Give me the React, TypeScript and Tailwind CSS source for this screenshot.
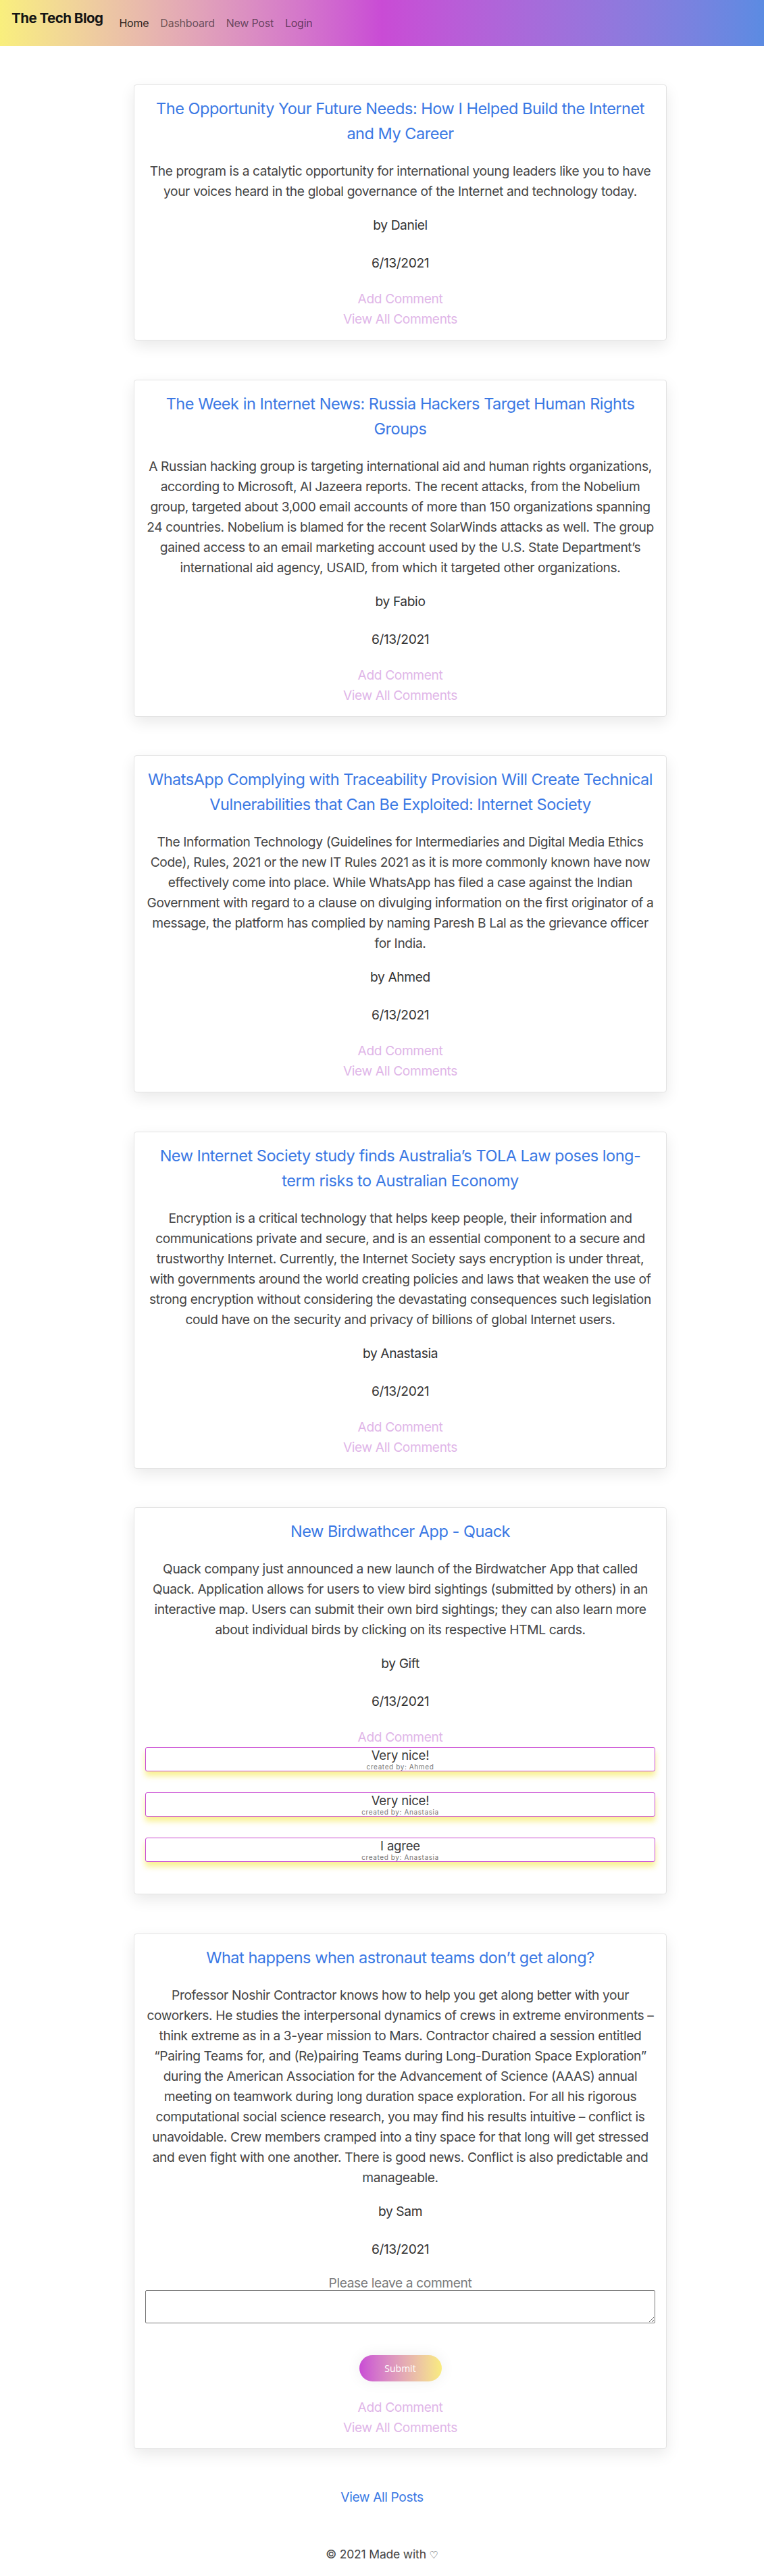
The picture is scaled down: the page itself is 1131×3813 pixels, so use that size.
import React from "react";

type Comment = {
  text: string;
  author: string;
};

type Post = {
  id: number;
  title: string[];
  body: string[];
  author: string;
  date: string;
  comments?: Comment[];
  showForm?: boolean;
};

const POSTS: Post[] = [
  {
    id: 1,
    title: [
      "The Opportunity Your Future Needs: How I Helped Build the Internet",
      "and My Career",
    ],
    body: [
      "The program is a catalytic opportunity for international young leaders like you to have",
      "your voices heard in the global governance of the Internet and technology today.",
    ],
    author: "Daniel",
    date: "6/13/2021",
  },
  {
    id: 2,
    title: [
      "The Week in Internet News: Russia Hackers Target Human Rights",
      "Groups",
    ],
    body: [
      "A Russian hacking group is targeting international aid and human rights organizations,",
      "according to Microsoft, Al Jazeera reports. The recent attacks, from the Nobelium",
      "group, targeted about 3,000 email accounts of more than 150 organizations spanning",
      "24 countries. Nobelium is blamed for the recent SolarWinds attacks as well. The group",
      "gained access to an email marketing account used by the U.S. State Department’s",
      "international aid agency, USAID, from which it targeted other organizations.",
    ],
    author: "Fabio",
    date: "6/13/2021",
  },
  {
    id: 3,
    title: [
      "WhatsApp Complying with Traceability Provision Will Create Technical",
      "Vulnerabilities that Can Be Exploited: Internet Society",
    ],
    body: [
      "The Information Technology (Guidelines for Intermediaries and Digital Media Ethics",
      "Code), Rules, 2021 or the new IT Rules 2021 as it is more commonly known have now",
      "effectively come into place. While WhatsApp has filed a case against the Indian",
      "Government with regard to a clause on divulging information on the first originator of a",
      "message, the platform has complied by naming Paresh B Lal as the grievance officer",
      "for India.",
    ],
    author: "Ahmed",
    date: "6/13/2021",
  },
  {
    id: 4,
    title: [
      "New Internet Society study finds Australia’s TOLA Law poses long-",
      "term risks to Australian Economy",
    ],
    body: [
      "Encryption is a critical technology that helps keep people, their information and",
      "communications private and secure, and is an essential component to a secure and",
      "trustworthy Internet. Currently, the Internet Society says encryption is under threat,",
      "with governments around the world creating policies and laws that weaken the use of",
      "strong encryption without considering the devastating consequences such legislation",
      "could have on the security and privacy of billions of global Internet users.",
    ],
    author: "Anastasia",
    date: "6/13/2021",
  },
  {
    id: 5,
    title: ["New Birdwathcer App - Quack"],
    body: [
      "Quack company just announced a new launch of the Birdwatcher App that called",
      "Quack. Application allows for users to view bird sightings (submitted by others) in an",
      "interactive map. Users can submit their own bird sightings; they can also learn more",
      "about individual birds by clicking on its respective HTML cards.",
    ],
    author: "Gift",
    date: "6/13/2021",
    comments: [
      { text: "Very nice!", author: "Ahmed" },
      { text: "Very nice!", author: "Anastasia" },
      { text: "I agree", author: "Anastasia" },
    ],
  },
  {
    id: 6,
    title: ["What happens when astronaut teams don’t get along?"],
    body: [
      "Professor Noshir Contractor knows how to help you get along better with your",
      "coworkers. He studies the interpersonal dynamics of crews in extreme environments –",
      "think extreme as in a 3-year mission to Mars. Contractor chaired a session entitled",
      "“Pairing Teams for, and (Re)pairing Teams during Long-Duration Space Exploration”",
      "during the American Association for the Advancement of Science (AAAS) annual",
      "meeting on teamwork during long duration space exploration. For all his rigorous",
      "computational social science research, you may find his results intuitive – conflict is",
      "unavoidable. Crew members cramped into a tiny space for that long will get stressed",
      "and even fight with one another. There is good news. Conflict is also predictable and",
      "manageable.",
    ],
    author: "Sam",
    date: "6/13/2021",
    showForm: true,
  },
];

function Lines({ lines }: { lines: string[] }) {
  return (
    <>
      {lines.map((line, i) => (
        <React.Fragment key={i}>
          {i > 0 && <br />}
          {line}
        </React.Fragment>
      ))}
    </>
  );
}

function Navbar() {
  return (
    <header className="flex h-[68px] items-start bg-gradient-to-r from-[#f9ef7d] via-[#c94bd5] to-[#5b8be2] pl-[17px]">
      <a className="mt-[12px] text-[20.5px] font-bold leading-[30px] tracking-[-0.025em] text-[#151515]">
        The Tech Blog
      </a>
      <nav className="ml-[24px] mt-[22px] flex gap-[17px] text-[16px] leading-[24px] tracking-[-0.015em]">
        <a className="text-[rgba(0,0,0,0.85)]">Home</a>
        <a className="text-[rgba(0,0,0,0.55)]">Dashboard</a>
        <a className="text-[rgba(0,0,0,0.55)]">New Post</a>
        <a className="text-[rgba(0,0,0,0.55)]">Login</a>
      </nav>
    </header>
  );
}

function PostCard({ post }: { post: Post }) {
  return (
    <article className="rounded-[4px] border border-[#e3e3e3] bg-white p-4 text-center shadow-[0_8px_22px_rgba(0,0,0,0.09)]">
      <h2 className="whitespace-nowrap text-[23.5px] leading-[37px] tracking-[-0.02em] text-[#3a78e4]">
        <Lines lines={post.title} />
      </h2>

      <p className="mt-[22px] whitespace-nowrap text-[19.2px] leading-[30px] tracking-[-0.02em] text-[#454545]">
        <Lines lines={post.body} />
      </p>

      <p className="mt-[20px] text-[19.2px] leading-[30px] tracking-[-0.02em] text-[#333]">
        by {post.author}
      </p>
      <p className="mt-[26px] text-[19.2px] leading-[30px] tracking-[-0.02em] text-[#333]">
        {post.date}
      </p>

      {/* comment form */}
      {post.showForm && (
        <form className="mt-[24px]">
          <label className="block text-[19.2px] leading-[22px] tracking-[-0.02em] text-[#7b7b7b]">
            Please leave a comment
          </label>
          <textarea className="block h-[49px] w-full rounded-[2px] border border-[#767676] bg-white" />
          <button
            type="button"
            className="mx-auto mt-[47px] block h-[39px] w-[122px] rounded-full bg-gradient-to-r from-[#c94bd5] to-[#f9ec7e] font-['Open_Sans',sans-serif] text-[14px] text-white shadow-[0_0_22px_rgba(0,0,0,0.07)]"
          >
            Submit
          </button>
        </form>
      )}

      <div className="mt-[23px] text-[19.2px] leading-[30px] tracking-[-0.02em] text-[#dfb6e8]">
        <a className="block">Add Comment</a>
        {!post.comments && <a className="block">View All Comments</a>}
      </div>

      {/* comments */}
      {post.comments && (
        <div className="pb-[31px]">
          {post.comments.map((c, i) => (
            <div
              key={i}
              className={`rounded-[3px] border-[1.5px] border-[#c94bd5] bg-white shadow-[0_7px_8px_rgba(247,236,110,0.75)] ${
                i > 0 ? "mt-[31px]" : ""
              }`}
            >
              <p className="text-[18.5px] leading-[22px] tracking-[-0.01em] text-[#3a3a3a]">
                {c.text}
              </p>
              <p className="text-[10px] leading-[12px] tracking-[0.06em] text-[#777]">
                created by: {c.author}
              </p>
            </div>
          ))}
        </div>
      )}
    </article>
  );
}

export default function App() {
  return (
    <div className="min-h-screen bg-white font-['Inter','Noto_Sans',sans-serif] text-[#333]">
      <Navbar />

      <main className="flex flex-col gap-[57.5px] pl-[198px] pr-[144px] pt-[57px]">
        {POSTS.map((post) => (
          <PostCard key={post.id} post={post} />
        ))}
      </main>

      <div className="mt-[56px] text-center text-[19.2px] leading-[30px] tracking-[-0.02em] text-[#3a78e4]">
        <a>View All Posts</a>
      </div>

      <footer className="mt-[56px] pb-[15px] text-center text-[17.5px] leading-[27px] tracking-[-0.01em] text-[#444]">
        © 2021 Made with <span className="font-['DejaVu_Sans',sans-serif] text-[15px]">♡</span>
      </footer>
    </div>
  );
}
